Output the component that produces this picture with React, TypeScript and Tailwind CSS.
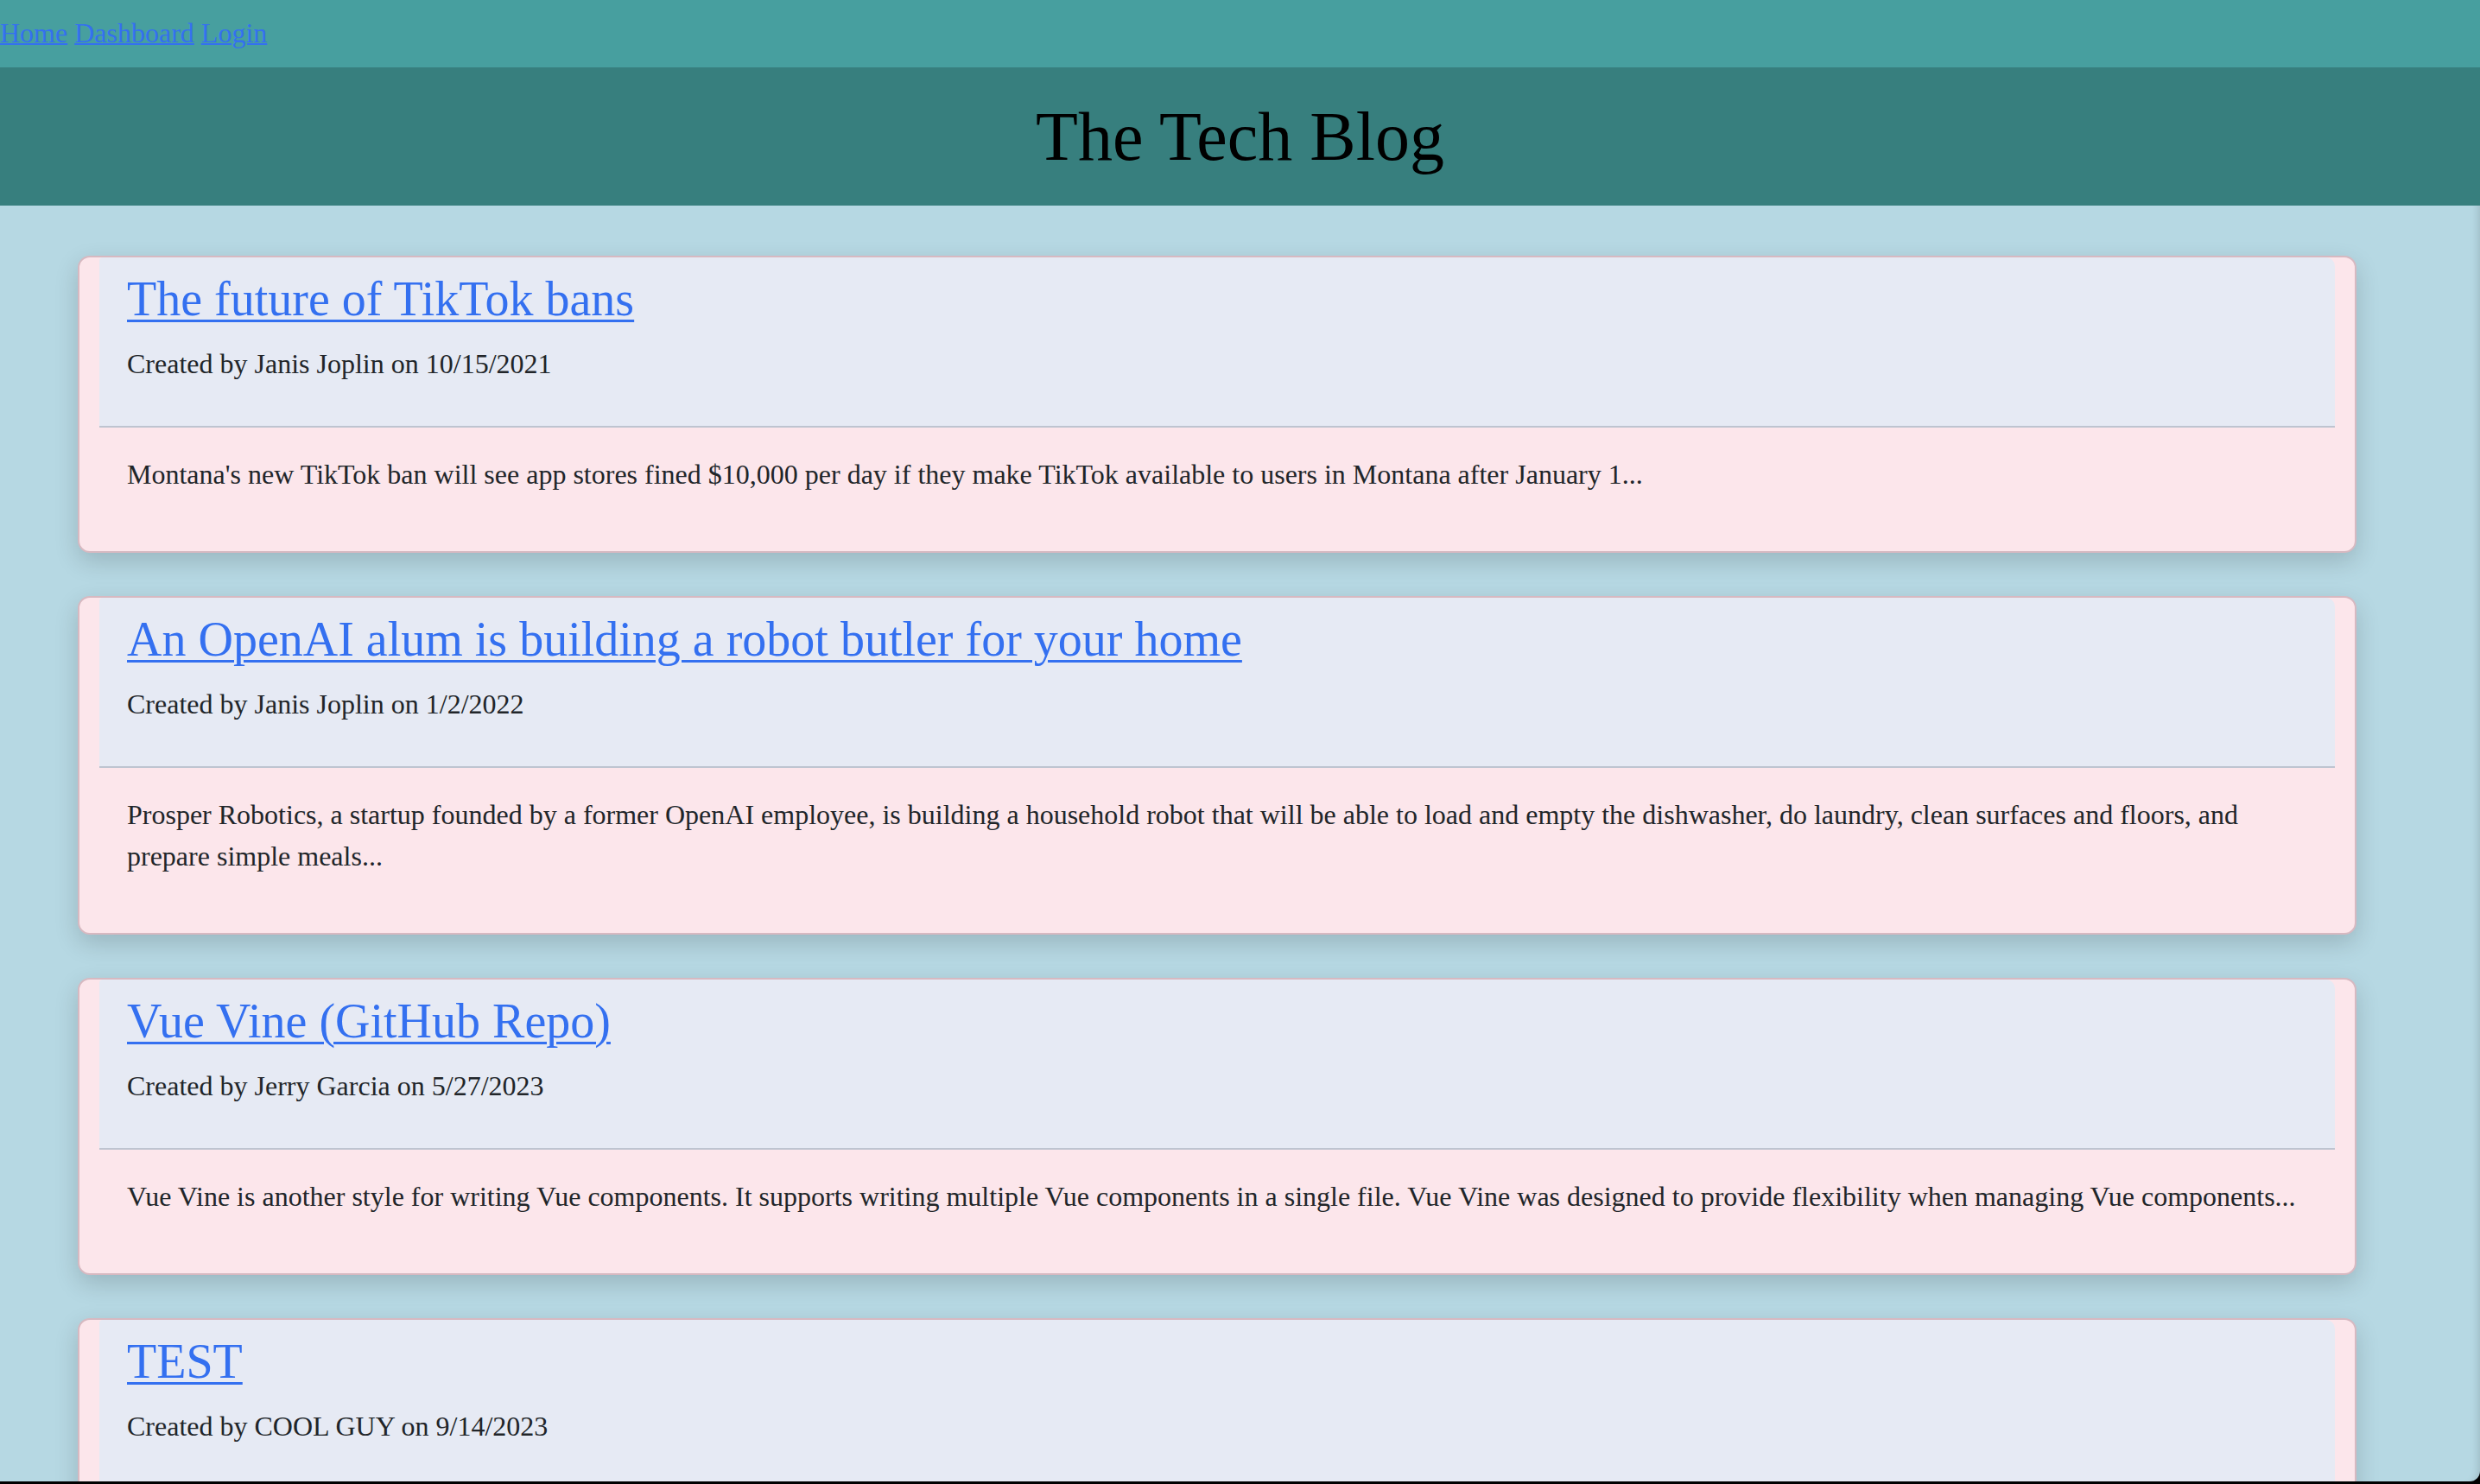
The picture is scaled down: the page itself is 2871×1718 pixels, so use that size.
import React from "react";

type Post = {
  id: number;
  title: string;
  author: string;
  date: string;
  body: string;
};

const posts: Post[] = [
  {
    id: 1,
    title: "The future of TikTok bans",
    author: "Janis Joplin",
    date: "10/15/2021",
    body: "Montana's new TikTok ban will see app stores fined $10,000 per day if they make TikTok available to users in Montana after January 1...",
  },
  {
    id: 2,
    title: "An OpenAI alum is building a robot butler for your home",
    author: "Janis Joplin",
    date: "1/2/2022",
    body: "Prosper Robotics, a startup founded by a former OpenAI employee, is building a household robot that will be able to load and empty the dishwasher, do laundry, clean surfaces and floors, and prepare simple meals...",
  },
  {
    id: 3,
    title: "Vue Vine (GitHub Repo)",
    author: "Jerry Garcia",
    date: "5/27/2023",
    body: "Vue Vine is another style for writing Vue components. It supports writing multiple Vue components in a single file. Vue Vine was designed to provide flexibility when managing Vue components...",
  },
  {
    id: 4,
    title: "TEST",
    author: "COOL GUY",
    date: "9/14/2023",
    body: "test",
  },
];

function PostCard({ post }: { post: Post }) {
  return (
    <article className="rounded-[14px] border-2 border-[#d7b9c1] bg-[#fce6eb] px-[23px] shadow-[0_10px_28px_rgba(0,0,0,0.16)]">
      <div className="rounded-tl-[4px] rounded-tr-[10px] border-b-2 border-[#bec4d0] bg-[#e6eaf4] px-8 pt-4 pb-12">
        <h2 className="text-[56px] leading-[64px]">
          <a
            href="#"
            className="text-[#3470f0] underline decoration-[3px] underline-offset-[5px]"
          >
            {post.title}
          </a>
        </h2>
        <p className="mt-[19px] text-[32px] leading-[48px] text-[#212529]">
          Created by {post.author} on {post.date}
        </p>
      </div>
      <p className="px-8 pt-[30px] pb-[65px] text-[32px] leading-[48px] text-[#212529]">
        {post.body}
      </p>
    </article>
  );
}

export default function App() {
  return (
    <div className="h-screen overflow-hidden bg-black pb-[3px] font-['Liberation_Serif',serif]">
      <div className="h-full overflow-hidden rounded-br-[12px] bg-[#b6d8e3] shadow-[inset_-10px_0_10px_-8px_rgba(0,0,0,0.14)]">
        <nav className="h-[78px] bg-[#479f9f] pt-5 text-[32px] leading-[36px]">
          <a href="#" className="text-[#3470f0] underline decoration-2">
            Home
          </a>{" "}
          <a href="#" className="text-[#3470f0] underline decoration-2">
            Dashboard
          </a>{" "}
          <a href="#" className="text-[#3470f0] underline decoration-2">
            Login
          </a>
        </nav>

        <header className="flex h-[160px] items-center justify-center bg-[#377f7e]">
          <h1 className="text-[80px] leading-[90px] text-black">The Tech Blog</h1>
        </header>

        <main className="flex flex-col gap-[50px] pt-[58px] pl-[90px] pr-[143px] pb-16">
          {posts.map((p) => (
            <PostCard key={p.id} post={p} />
          ))}
        </main>
      </div>
    </div>
  );
}
